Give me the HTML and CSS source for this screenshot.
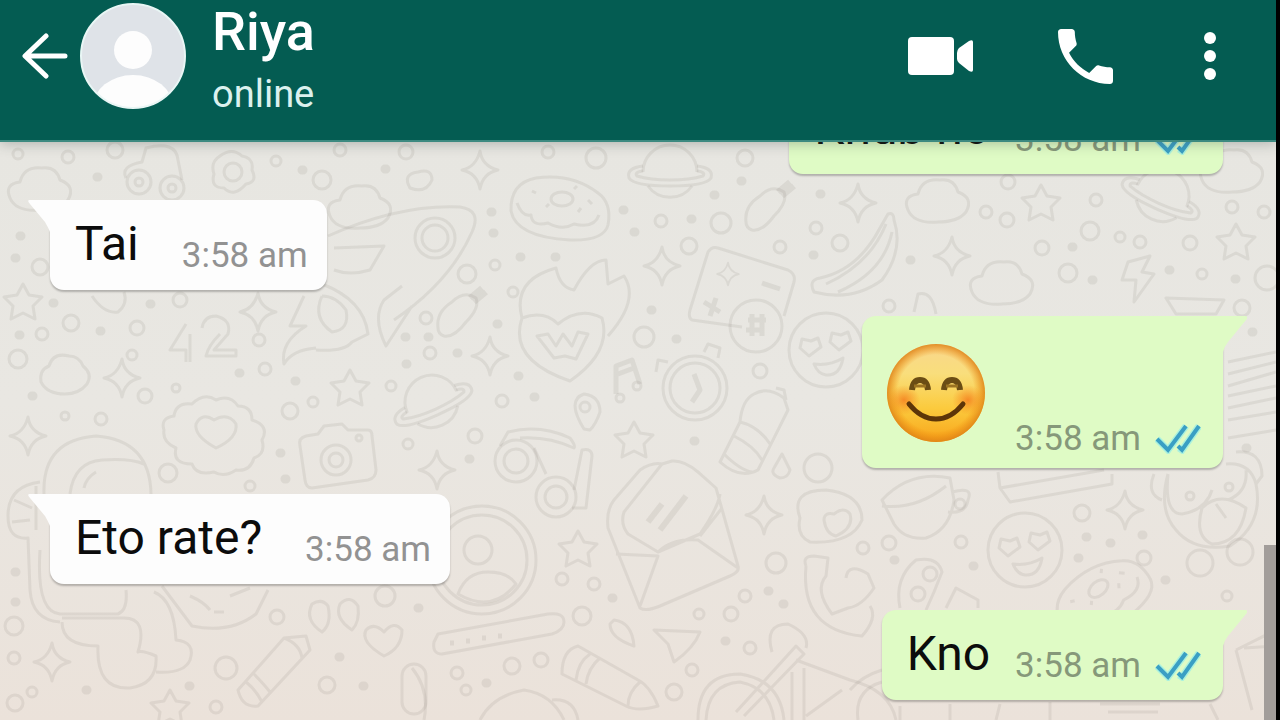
FILE: index.html
```html
<!DOCTYPE html>
<html lang="en">
<head>
<meta charset="utf-8">
<meta name="viewport" content="width=device-width, initial-scale=1">
<title>Riya</title>
<link rel="stylesheet" href="styles.css">
</head>
<body>
<svg class="defs" aria-hidden="true">
  <symbol id="ticks" viewBox="0 0 46 30">
    <path d="M2 15l11 11L31 2M24 24l3 2L44 2" fill="none" stroke="#7deaf2" stroke-width="7" opacity=".55"/>
    <path d="M2 15l11 11L31 2M23 22l4 4L44 2" fill="none" stroke="#3a9fc4" stroke-width="4"/>
  </symbol>
  <symbol id="tail-in" viewBox="0 0 22 32"><path d="M1 0H22V32Q20 27 17 22L2 4Q-1 1 1 0Z" fill="#fdfdfd"/></symbol>
  <symbol id="tail-out" viewBox="0 0 24 36"><path d="M0 0H22Q26 0 23 4L5 26Q1 31 0 36Z" fill="#dffbc5"/></symbol>
</svg>

<header class="bar">
  <button class="icon-button back" aria-label="Back">
    <svg width="46" height="48" viewBox="0 0 46 48"><path d="M24 4L3 24L24 44M4 24H43" fill="none" stroke="#fff" stroke-width="5" stroke-linecap="round" stroke-linejoin="round"/></svg>
  </button>
  <button class="icon-button" aria-label="Contact photo">
    <svg width="106" height="106" viewBox="0 0 106 106">
      <clipPath id="round"><circle cx="53" cy="53" r="52"/></clipPath>
      <circle cx="53" cy="53" r="52" fill="#dfe3e8"/>
      <g clip-path="url(#round)" fill="#fdfdfd"><circle cx="53" cy="47" r="19"/><ellipse cx="53" cy="104" rx="40" ry="32"/></g>
      <circle cx="53" cy="53" r="52" fill="none" stroke="#e9f6f5" stroke-width="2"/>
    </svg>
  </button>
  <div class="contact">
    <h1 class="name">Riya</h1>
    <p class="status">online</p>
  </div>
  <nav class="actions" aria-label="Chat actions">
    <button class="icon-button" aria-label="Video call">
      <svg width="65" height="40" viewBox="0 0 65 40" fill="#fff"><rect x="0" y="1" width="46" height="38" rx="4"/><path d="M49 17Q49 14 51 12L61 5Q65 3 65 6V34Q65 37 61 35L51 27Q49 25 49 23Z"/></svg>
    </button>
    <button class="icon-button" aria-label="Voice call">
      <svg width="55" height="55" viewBox="3 3 18 18" fill="#fff"><path d="M6.62 10.79c1.44 2.83 3.76 5.14 6.59 6.59l2.2-2.2c.27-.27.67-.36 1.02-.24 1.12.37 2.33.57 3.57.57.55 0 1 .45 1 1V20c0 .55-.45 1-1 1-9.39 0-17-7.61-17-17 0-.55.45-1 1-1h3.5c.55 0 1 .45 1 1 0 1.25.2 2.45.57 3.57.11.35.03.74-.25 1.02l-2.2 2.2z"/></svg>
    </button>
    <button class="icon-button" aria-label="More options">
      <svg width="24" height="48" viewBox="0 0 24 48" fill="#fff"><circle cx="12" cy="6" r="6"/><circle cx="12" cy="24" r="6"/><circle cx="12" cy="42" r="6"/></svg>
    </button>
  </nav>
</header>

<main class="chat">
  <svg class="wallpaper" viewBox="0 142 1276 578" preserveAspectRatio="xMidYMid slice" aria-hidden="true">
    <defs>
      <path id="sparkle" d="M0-19Q2-4 18 0Q3 3 0 19Q-3 3-18 0Q-4-3 0-19Z"/>
      <path id="star" d="M0-18L6-7 19-5 10 4 12 17 0 11-12 17-10 4-19-5-6-7Z"/>
      <path id="cloud" d="M-30 8Q-36-6-20-8Q-16-24 2-22Q16-24 20-10Q36-4 28 10Q20 20 0 20Q-24 22-30 8Z"/>
      <path id="small-cloud" d="M-24 8Q-26-4-16-8Q-12-22 4-18Q14-18 18-8Q28 0 22 10Q14 20 0 20Q-18 20-24 8Z"/>
      <g id="planet"><path d="M-27 0A27 27 0 0 1 27 0M-22 14A27 27 0 0 0 22 14"/><path d="M-27-6Q-44-4-41 6Q-36 14 0 14Q36 14 41 6Q44-4 27-6M-27-1Q-36 0-33 4Q-20 8 0 8Q20 8 33 4Q36 0 27-1"/></g>
      <g id="drumstick"><path d="M-24 16Q-26 0-10-10Q2-22 14-14Q18-4 4 10Q-8 26-18 24Q-24 22-24 16Z"/><path d="M8-14L20-24M12-10L24-20" stroke-width="6"/></g>
      <g id="face"><circle r="37"/><path d="M-26-2l2-9 9 2 7-3 3 9-12 9ZM4-8l2-9 9 2 7-3 3 9-12 9ZM-12 14Q4 16 17 8Q14 26 0 25Q-8 24-12 14Z"/></g>
      <g id="donut"><path d="M-49 4Q-50-24-24-29Q12-34 38-14Q52-4 48 18Q44 34 10 33Q-44 30-49 4Z"/><path d="M-43-4Q-38 10-29 8Q-28 20-12 16Q2 24 14 17Q34 22 39 8"/><ellipse cx="2" cy="-8" rx="11" ry="7"/><path d="M-28-16l4 2M-14 0l3-3M18 5l3-4M28-7l4 4M14-18l3-3"/></g>
    </defs>
    <g class="doodles">
      <use href="#sparkle" x="480" y="170"/><use href="#sparkle" x="662" y="266"/><use href="#sparkle" x="490" y="356"/><use href="#sparkle" x="437" y="470"/><use href="#sparkle" x="764" y="515"/><use href="#sparkle" x="1125" y="510"/><use href="#sparkle" x="52" y="662"/><use href="#sparkle" x="258" y="312"/><use href="#sparkle" x="28" y="436"/><use href="#sparkle" x="952" y="256"/><use href="#sparkle" x="858" y="203"/><use href="#sparkle" x="122" y="378"/>
      <use href="#star" x="23" y="302"/><use href="#star" x="350" y="388"/><use href="#star" x="1041" y="203"/><use href="#star" x="1236" y="242"/><use href="#star" x="634" y="440"/><use href="#star" x="578" y="549"/><use href="#star" x="170" y="708"/>
      <use href="#cloud" x="40" y="190"/><use href="#cloud" x="360" y="208"/><use href="#small-cloud" x="65" y="374"/><use href="#cloud" x="938" y="202"/><use href="#cloud" x="1002" y="284"/><use href="#cloud" x="1232" y="172"/>
      <use href="#planet" x="670" y="172"/><use href="#planet" transform="translate(432 402) rotate(-24)"/><use href="#planet" transform="translate(1162 196) rotate(24)"/>
      <use href="#drumstick" x="770" y="206"/><use href="#drumstick" x="462" y="312"/>
      <use href="#face" x="826" y="350"/><use href="#face" x="1025" y="550"/>
      <use href="#donut" x="560" y="207"/><use href="#donut" transform="translate(1102 596) rotate(-40)"/>

      <!-- flowers and toy car -->
      <path d="M220 156q12-9 22 0q12 2 10 14q6 12-6 14q-12 14-22 4q-14 0-10-14q-4-12 6-18Z"/><circle cx="233" cy="172" r="9"/>
      <path d="M126 178Q120 166 142 162L146 148Q176 140 178 160L182 180"/><circle cx="139" cy="182" r="12"/><circle cx="139" cy="182" r="4"/><circle cx="172" cy="188" r="12"/><circle cx="172" cy="188" r="4"/>
      <path d="M410 188q-8-14 8-16q14-4 14 8q-6 14-22 8Z"/>

      <!-- rocket -->
      <path d="M328 236Q400 204 460 207Q482 210 472 232Q450 282 394 320M334 248L384 246L370 270Q350 276 334 270M402 286L384 300Q372 318 386 346L412 306"/><circle cx="435" cy="238" r="20"/><circle cx="435" cy="238" r="13"/>
      <path d="M322 284Q364 300 368 334L352 342Q344 352 316 350M322 296Q312 318 332 332Q350 330 346 310Q336 296 322 296M304 296L290 326L306 326Q280 342 284 364Q292 350 316 348"/>
      <path d="M92 296Q104 314 118 312Q128 304 124 292"/>

      <!-- burning heart -->
      <path d="M522 318Q512 280 556 268Q560 288 574 290Q590 260 606 260L608 284L624 276Q640 300 608 336M522 318Q544 310 558 324Q580 306 602 318Q612 352 570 381Q508 360 522 318Z"/><path d="M537 336L548 334 556 346 563 334 572 346 578 332 588 334 576 359 565 356 554 358Z"/>

      <!-- game tiles -->
      <path d="M742 327L692 320Q688 318 690 310L708 252Q712 246 718 248L788 270Q796 274 794 282L784 316"/><circle cx="756" cy="326" r="26"/><use href="#sparkle" transform="translate(728 274) scale(.6)"/><path d="M762 283l18 6M704 302l16 10M716 298l-6 18M748 320h18M746 330h18M752 314v22M762 314v22" stroke-width="5"/>

      <!-- banana -->
      <path d="M888 214Q894 212 894 220Q904 250 882 280Q852 302 814 292Q808 280 820 278Q858 270 880 228ZM886 224Q870 264 826 284M892 232Q884 272 838 292"/>

      <!-- digits -->
      <path d="M186 324L170 350H186V362M190 334V362M202 328Q204 316 216 316Q232 320 228 334L214 350H236V356H206Q208 346 220 334"/>

      <!-- music, stopwatch, pin -->
      <path d="M616 394V366L632 360L640 384M618 374L634 368" stroke-width="5"/><circle cx="620" cy="398" r="4"/><circle cx="637" cy="386" r="4"/>
      <circle cx="695" cy="388" r="32"/><circle cx="695" cy="388" r="25"/><path d="M694 374L700 390L692 402" stroke-width="5"/><path d="M704 352l4-8 12 4-2 10M656 372l2-12 10 2"/>
      <path d="M584 429Q566 400 584 394Q600 396 600 412Q596 424 590 430Z"/><circle cx="585" cy="407" r="5"/>

      <!-- bottle -->
      <path d="M754 394Q768 386 784 398L788 410L758 470Q740 480 720 462L740 422Q742 400 754 394ZM776 388l8 2 2 10M740 422Q758 426 770 444M734 436Q754 446 762 460M724 454Q740 470 752 472"/>

      <!-- camera -->
      <path d="M300 446Q298 438 306 436L318 434 324 426 342 424 348 430 368 430Q372 430 372 436L376 470Q376 478 368 480L312 488Q306 488 305 480Z"/><circle cx="336" cy="460" r="15"/><circle cx="336" cy="460" r="7"/><circle cx="359" cy="438" r="3"/>

      <!-- badge -->
      <path d="M164 430q-4-12 10-14q2-14 18-12q12-12 24-4q14-6 22 6q14 0 14 14q18 6 10 20q4 14-8 18q-4 14-18 12q-12 8-22 2q-18 4-22-8q-20 0-16-16q-14-6-12-18Z"/><path d="M216 448Q194 436 196 424Q202 412 214 420Q228 412 236 424Q238 438 216 448Z"/>

      <!-- astronaut -->
      <path d="M44 494Q42 440 96 436Q150 440 151 494M70 494Q74 462 102 460Q130 458 144 464M84 488Q86 478 96 472M40 482Q8 486 8 516Q8 540 28 538L30 590Q32 620 60 622M36 486V530M14 500L32 508M12 522L30 520M40 550Q36 612 60 614H118Q128 610 126 590M62 622Q62 646 98 646Q96 690 130 688Q158 684 156 656Q142 650 138 652Q148 618 124 618H62M154 592Q174 600 176 640Q196 642 190 660Q184 674 156 672M162 586Q180 610 192 626Q230 634 256 614L268 590M190 596q14 6 20 14M214 612h10M230 596l20-8"/>

      <!-- crayon, quotes, heart -->
      <path d="M306 636L310 650L258 706Q242 708 238 690L284 638ZM284 638Q300 644 302 658M252 672Q264 684 270 692M246 682Q256 690 262 702"/>
      <path d="M322 632Q304 620 312 604Q322 598 328 606Q332 624 322 632ZM352 630Q334 618 340 604Q350 594 358 606Q360 622 352 630ZM384 656Q360 642 366 630Q374 622 384 632Q394 620 402 630Q402 648 384 656Z"/>
      <rect x="402" y="664" width="24" height="50" rx="12"/>

      <!-- sunglasses -->
      <circle cx="516" cy="461" r="21"/><circle cx="516" cy="461" r="12"/><circle cx="556" cy="497" r="20"/><circle cx="556" cy="497" r="11"/><path d="M500 446L508 432Q540 424 570 438Q576 446 574 448Q548 436 520 438M534 448L546 474M574 490L582 450Q592 448 592 456L586 508H572"/>

      <!-- contact medallion, wristband -->
      <circle cx="482" cy="560" r="54"/><circle cx="482" cy="560" r="45"/><circle cx="478" cy="550" r="14"/><path d="M458 594Q466 572 488 572Q508 572 516 584Q492 614 458 594Z"/>
      <path d="M438 634L548 614Q564 612 564 622Q564 630 552 634L442 654Q432 654 434 642Z"/><path d="M450 643h4M466 641h4M482 638h4M498 636h4" stroke-width="5"/>

      <!-- envelope -->
      <path d="M640 608L608 528Q606 510 614 500L640 470Q652 462 662 464L672 461Q684 460 698 472L716 488L738 566Q740 572 730 576L660 606Q646 612 640 608ZM662 464L624 512Q620 524 628 534L658 552 700 534Q718 508 720 494M616 554L658 556L640 606M658 552Q672 538 698 540L738 568M700 536L722 508"/><path d="M648 522l14-18M660 530l26-34" stroke-width="6"/>

      <!-- pencil, leaf, plane -->
      <path d="M578 646L638 680Q650 686 658 706Q638 712 626 706L562 674Q562 650 578 646ZM590 654Q578 662 576 680M600 658Q588 668 586 684M640 682Q628 692 628 706"/>
      <path d="M614 620Q632 622 634 646Q610 638 610 624ZM654 630L700 632Q694 648 674 662L668 644Z"/>
      <path d="M480 720Q492 696 524 690Q552 694 564 720M552 700Q574 698 578 720M412 668Q430 690 424 720"/>

      <!-- bicycle -->
      <path d="M698 720Q698 674 740 674Q780 680 784 720M706 720Q708 684 740 682Q770 688 774 720M736 712L796 646L804 654L744 716M772 652Q764 624 788 624Q810 634 806 648M796 660L850 680Q890 690 896 720M804 668V720M792 672V720M806 716L842 690"/>

      <!-- droplet, chat, handset -->
      <path d="M782 454L790 470Q788 478 780 478Q770 474 774 468ZM800 518Q790 490 826 490Q862 494 862 520Q852 544 810 542Q796 536 800 518ZM824 520q0-8 10-6q10-8 16 0q4 14-14 22Q826 534 824 520Z"/><circle cx="818" cy="468" r="14"/>
      <path d="M806 566Q802 556 814 556L828 558L826 576Q814 590 832 614L848 608Q862 606 874 588L868 574Q848 562 846 578M806 566Q800 630 862 636Q878 618 870 606"/>

      <!-- cup and book -->
      <path d="M882 500Q910 470 950 478L954 500Q950 530 926 538Q904 540 894 524ZM882 506Q916 510 946 486M952 492Q974 486 968 500Q966 514 948 512"/><circle cx="960" cy="504" r="5"/>
      <path d="M998 472L1000 488 1010 502 1112 484V474M1000 488L1104 470"/>

      <!-- monkey -->
      <path d="M1168 474Q1158 510 1176 530Q1194 552 1230 546Q1264 524 1256 484Q1250 462 1226 464M1168 474Q1164 514 1182 514Q1206 510 1212 490M1202 508Q1220 490 1246 508Q1240 544 1212 544Q1194 536 1202 508M1216 504L1226 518M1228 500Q1248 492 1246 470M1236 452Q1262 450 1262 476L1256 484M1154 474Q1146 494 1162 500"/><circle cx="1190" cy="496" r="4"/><circle cx="1229" cy="487" r="4"/><circle cx="1200" cy="563" r="13"/><circle cx="1240" cy="552" r="13"/>

      <!-- cheese, lightning, kite, lines -->
      <path d="M900 608Q894 578 916 560Q938 556 942 572L934 592L926 610M946 608L956 588L978 600V608"/><circle cx="930" cy="574" r="7"/><circle cx="918" cy="594" r="7"/>
      <path d="M1128 262L1150 256L1142 272L1154 274L1134 302L1136 280H1122ZM1166 298L1224 300L1216 314H1176ZM914 312L918 294Q932 290 936 314"/>
      <path d="M1228 362L1276 352M1228 374L1276 362M1228 386L1276 372M1228 396L1276 386M1228 408L1276 398M1228 420L1276 412M1228 438L1276 430"/>
      <path d="M1236 650L1276 630M1236 650L1252 710M1244 648L1276 646M850 690Q862 676 882 670M858 720Q854 690 882 682M900 706v14M950 704v16M1000 704l-4 16M1050 702v18M1100 704h60M1108 712h50M1210 704l8 16"/>
    </g>
    <g class="dots">
      <circle cx="18" cy="154" r="5"/><circle cx="68" cy="157" r="6"/><circle cx="115" cy="150" r="8"/><circle cx="276" cy="161" r="5"/><circle cx="322" cy="180" r="9"/><circle cx="340" cy="150" r="6"/><circle cx="406" cy="152" r="7"/><circle cx="548" cy="152" r="6"/><circle cx="596" cy="158" r="10"/><circle cx="745" cy="158" r="8"/><circle cx="661" cy="221" r="6"/><circle cx="721" cy="223" r="10"/><circle cx="689" cy="246" r="8"/><circle cx="467" cy="274" r="9"/><circle cx="495" cy="265" r="5"/><circle cx="513" cy="292" r="5"/><circle cx="426" cy="318" r="6"/><circle cx="430" cy="353" r="6"/><circle cx="644" cy="337" r="10"/><circle cx="760" cy="371" r="7"/><circle cx="780" cy="247" r="6"/><circle cx="816" cy="228" r="6"/><circle cx="840" cy="243" r="8"/><circle cx="502" cy="401" r="6"/>
      <circle cx="40" cy="267" r="8"/><circle cx="71" cy="323" r="8"/><circle cx="42" cy="334" r="6"/><circle cx="18" cy="359" r="9"/><circle cx="137" cy="328" r="7"/><circle cx="180" cy="300" r="7"/><circle cx="132" cy="355" r="5"/><circle cx="259" cy="340" r="6"/><circle cx="265" cy="369" r="6"/><circle cx="145" cy="396" r="7"/><circle cx="176" cy="388" r="4"/><circle cx="290" cy="411" r="8"/><circle cx="313" cy="402" r="5"/><circle cx="391" cy="386" r="5"/><circle cx="101" cy="419" r="6"/><circle cx="65" cy="416" r="4"/><circle cx="168" cy="473" r="9"/><circle cx="250" cy="486" r="5"/><circle cx="408" cy="444" r="5"/>
      <circle cx="1008" cy="182" r="7"/><circle cx="986" cy="212" r="6"/><circle cx="1007" cy="220" r="7"/><circle cx="1096" cy="200" r="6"/><circle cx="1090" cy="231" r="9"/><circle cx="1042" cy="248" r="7"/><circle cx="1120" cy="237" r="5"/><circle cx="1140" cy="242" r="6"/><circle cx="1190" cy="243" r="7"/><circle cx="1232" cy="207" r="6"/><circle cx="1264" cy="212" r="6"/><circle cx="1068" cy="273" r="9"/><circle cx="1202" cy="274" r="5"/><circle cx="1267" cy="278" r="12"/><circle cx="889" cy="306" r="6"/><circle cx="1242" cy="308" r="8"/>
      <circle cx="14" cy="626" r="9"/><circle cx="14" cy="658" r="6"/><circle cx="15" cy="703" r="8"/><circle cx="32" cy="692" r="5"/><circle cx="226" cy="668" r="11"/><circle cx="277" cy="617" r="7"/><circle cx="327" cy="685" r="8"/><circle cx="385" cy="596" r="10"/><circle cx="216" cy="707" r="6"/><circle cx="475" cy="436" r="7"/><circle cx="562" cy="579" r="6"/><circle cx="594" cy="584" r="6"/><circle cx="582" cy="616" r="9"/><circle cx="512" cy="666" r="8"/><circle cx="541" cy="660" r="7"/><circle cx="457" cy="673" r="6"/><circle cx="466" cy="690" r="5"/><circle cx="674" cy="692" r="8"/><circle cx="692" cy="670" r="6"/><circle cx="776" cy="563" r="10"/><circle cx="731" cy="614" r="7"/><circle cx="745" cy="596" r="6"/><circle cx="750" cy="648" r="6"/><circle cx="699" cy="614" r="5"/><circle cx="889" cy="543" r="7"/><circle cx="961" cy="542" r="6"/><circle cx="1082" cy="513" r="8"/><circle cx="1144" cy="558" r="7"/><circle cx="1227" cy="596" r="5"/><circle cx="863" cy="548" r="6"/>
    </g>
    <g class="specks">
      <path d="M97 177h1M302 170h1M385 169h1M491 212h1M493 233h1M520 257h1M555 257h1M634 232h1M623 210h1M691 219h1M714 195h1M741 181h1M820 194h1M813 255h1M497 324h1M518 376h1M534 397h1M651 310h1M676 339h1M428 337h1M457 353h1M20 236h1M15 258h1M150 304h1M53 303h1M100 331h1M19 335h1M239 373h1M295 381h1M32 396h1M405 337h1M406 364h1M910 260h1M1072 247h1M1092 280h1M1169 270h1M1235 279h1M1252 332h1M280 453h1M285 479h1M469 459h1M694 441h1M15 572h1M15 602h1M86 690h1M189 686h1M339 657h1M363 686h1M418 608h1M612 598h1M486 683h1M768 591h1M783 604h1M725 641h1M894 560h1M973 566h1M1086 537h1M1110 543h1M1142 535h1M1078 558h1M1165 580h1M1246 448h1"/>
    </g>
  </svg>

  <ol class="messages">
    <li class="bubble out">
      <p class="text">Khub no</p>
      <span class="meta"><time>3:58 am</time><svg class="ticks" role="img" aria-label="Read"><use href="#ticks"/></svg></span>
    </li>
    <li class="bubble in">
      <svg class="tail tail-in" aria-hidden="true"><use href="#tail-in"/></svg>
      <p class="text">Tai</p>
      <span class="meta"><time>3:58 am</time></span>
    </li>
    <li class="bubble out roomy">
      <svg class="tail tail-out" aria-hidden="true"><use href="#tail-out"/></svg>
      <svg class="emoji" viewBox="0 0 98 98" role="img" aria-label="Smiling face with smiling eyes">
        <defs>
          <linearGradient id="skin" x1="0" y1="0" x2="0" y2="1"><stop offset="0" stop-color="#f9d68c"/><stop offset=".3" stop-color="#f9de7c"/><stop offset=".65" stop-color="#fbcb3e"/><stop offset="1" stop-color="#f8a41a"/></linearGradient>
          <radialGradient id="rim" cx=".5" cy=".5" r=".5"><stop offset=".78" stop-color="#f08a0c" stop-opacity="0"/><stop offset="1" stop-color="#dd8218" stop-opacity=".85"/></radialGradient>
          <radialGradient id="blush"><stop offset="0" stop-color="#f4741a" stop-opacity=".75"/><stop offset="1" stop-color="#f4841a" stop-opacity="0"/></radialGradient>
        </defs>
        <circle cx="49" cy="49" r="49" fill="url(#skin)"/>
        <circle cx="49" cy="49" r="49" fill="url(#rim)"/>
        <ellipse cx="17" cy="56" rx="16" ry="15" fill="url(#blush)"/><ellipse cx="81" cy="56" rx="16" ry="15" fill="url(#blush)"/>
        <path d="M25 46Q26 36 33 36Q40 36 41 46M57 46Q58 36 65 36Q72 36 73 46" fill="none" stroke="#6b4d14" stroke-width="6"/>
        <path d="M27 42H39M59 42H71" fill="none" stroke="#9c7422" stroke-width="3"/>
        <path d="M22 60Q34 75 49 75Q64 75 76 60" fill="none" stroke="#5d3508" stroke-width="5" stroke-linecap="round"/>
      </svg>
      <span class="meta"><time>3:58 am</time><svg class="ticks" role="img" aria-label="Read"><use href="#ticks"/></svg></span>
    </li>
    <li class="bubble in">
      <svg class="tail tail-in" aria-hidden="true"><use href="#tail-in"/></svg>
      <p class="text">Eto rate?</p>
      <span class="meta"><time>3:58 am</time></span>
    </li>
    <li class="bubble out">
      <svg class="tail tail-out" aria-hidden="true"><use href="#tail-out"/></svg>
      <p class="text">Kno</p>
      <span class="meta"><time>3:58 am</time><svg class="ticks" role="img" aria-label="Read"><use href="#ticks"/></svg></span>
    </li>
  </ol>
  <div class="scroll-thumb"></div>
</main>
</body>
</html>
```

FILE: styles.css
```css
* {
  box-sizing: border-box;
  margin: 0;
  padding: 0;
}

body {
  display: flex;
  flex-direction: column;
  height: 100vh;
  overflow: hidden;
  border-right: 4px solid #000;
  background: #e8e7e2;
  font-family: Roboto, "Liberation Sans", sans-serif;
}

.defs {
  position: absolute;
  width: 0;
  height: 0;
}

.bar {
  position: relative;
  z-index: 1;
  display: flex;
  flex: none;
  align-items: flex-start;
  padding: 0 54px 24px 22px;
  border-bottom: 2px solid #3d8a80;
  background: #045c52;
  box-shadow: 0 2px 12px rgba(60, 70, 66, 0.3);
  color: #fff;
}

.icon-button {
  display: flex;
  align-items: center;
  height: 112px;
  border: 0;
  background: none;
  cursor: pointer;
}

.back {
  margin-right: 12px;
}

.contact {
  margin-left: 26px;
}

.name {
  font-size: 54px;
  font-weight: 500;
  line-height: 64px;
}

.status {
  margin-top: 8px;
  color: #dcf1ee;
  font-size: 38px;
  line-height: 44px;
}

.actions {
  display: flex;
  gap: 85px;
  margin-left: auto;
}

.chat {
  position: relative;
  display: flex;
  flex: 1;
  flex-direction: column;
  justify-content: flex-end;
  min-height: 0;
  overflow: hidden;
  background: linear-gradient(#e7e6e1, #e9e7e2 45%, #ebe2da);
}

.wallpaper {
  position: absolute;
  inset: 0;
  width: 100%;
  height: 100%;
}

.doodles,
.dots {
  fill: none;
  stroke: rgba(120, 112, 104, 0.12);
  stroke-width: 3;
  stroke-linejoin: round;
}

.specks {
  fill: none;
  stroke: rgba(120, 112, 104, 0.12);
  stroke-width: 9;
  stroke-linecap: round;
}

.messages {
  position: relative;
  display: flex;
  flex-direction: column;
  gap: 26px;
  padding: 0 53px 20px 50px;
  list-style: none;
}

.bubble {
  position: relative;
  display: flex;
  align-items: flex-end;
  padding: 16px 19px 14px 25px;
  border-radius: 14px;
  box-shadow: 0 2px 2px rgba(0, 0, 0, 0.24);
}

.in {
  align-self: flex-start;
  gap: 43px;
  border-top-left-radius: 0;
  background: #fdfdfd;
}

.out {
  align-self: flex-end;
  gap: 25px;
  padding-right: 22px;
  border-top-right-radius: 0;
  background: #dffbc5;
}

.roomy {
  gap: 30px;
  padding-top: 28px;
  padding-bottom: 9px;
}

.text {
  padding-bottom: 4px;
  color: #0c0c0c;
  font-size: 48px;
  line-height: 56px;
}

.meta {
  display: flex;
  align-items: center;
  gap: 14px;
  color: #929292;
  font-size: 35px;
  line-height: 40px;
}

.out .meta {
  color: #86987a;
}

.ticks {
  width: 46px;
  height: 30px;
}

.emoji {
  width: 98px;
  height: 98px;
  margin-bottom: 17px;
}

.tail {
  position: absolute;
  top: 0;
}

.tail-in {
  right: 100%;
  width: 22px;
  height: 32px;
}

.tail-out {
  left: 100%;
  width: 24px;
  height: 36px;
}

.scroll-thumb {
  position: absolute;
  right: 0;
  bottom: 0;
  width: 12px;
  height: 175px;
  background: #a29d9a;
}
```
